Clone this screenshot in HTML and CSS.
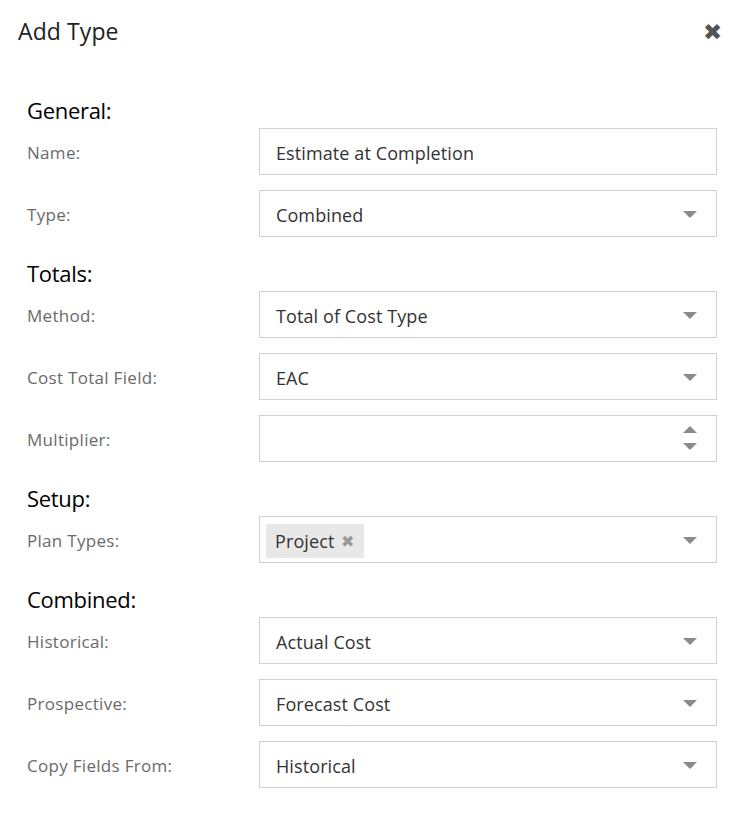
FILE: index.html
```html
<html>
  <head>
    <link rel="stylesheet" href="styles.css">
  </head>
  <body>

    <div class="dialog">
      <div class="dialog-header">
        <div class="dialog-title">Add Type</div>
        <div class="dialog-close">&#10006;</div>
      </div>

      <div class="dialog-body">
        <div class="section-title">General:</div>
        <div class="field">
          <div class="field-label">Name:</div>
          <div class="field-control">Estimate at Completion</div>
        </div>
        <div class="field">
          <div class="field-label">Type:</div>
          <div class="field-control select">Combined<span class="caret"></span></div>
        </div>

        <div class="section-title">Totals:</div>
        <div class="field">
          <div class="field-label">Method:</div>
          <div class="field-control select">Total of Cost Type<span class="caret"></span></div>
        </div>
        <div class="field">
          <div class="field-label">Cost Total Field:</div>
          <div class="field-control select">EAC<span class="caret"></span></div>
        </div>
        <div class="field">
          <div class="field-label">Multiplier:</div>
          <div class="field-control">
            <span class="spinner">
              <span class="spin-up"></span>
              <span class="spin-down"></span>
            </span>
          </div>
        </div>

        <div class="section-title">Setup:</div>
        <div class="field">
          <div class="field-label">Plan Types:</div>
          <div class="field-control select tags">
            <span class="tag">Project <span class="tag-remove">&#10006;</span></span>
            <span class="caret"></span>
          </div>
        </div>

        <div class="section-title">Combined:</div>
        <div class="field">
          <div class="field-label">Historical:</div>
          <div class="field-control select">Actual Cost<span class="caret"></span></div>
        </div>
        <div class="field">
          <div class="field-label">Prospective:</div>
          <div class="field-control select">Forecast Cost<span class="caret"></span></div>
        </div>
        <div class="field">
          <div class="field-label">Copy Fields From:</div>
          <div class="field-control select">Historical<span class="caret"></span></div>
        </div>
      </div>
    </div>

  </body>
</html>
```

FILE: styles.css
```css
body {
  font-family: "Segoe UI", "Open Sans", "Noto Sans", sans-serif;
  margin: 0;
  background: #FFFFFF;
  color: #333333;
}

.dialog {
  width: 746px;
}

.dialog-header {
  display: flex;
  align-items: center;
  justify-content: space-between;
  height: 62px;
  padding: 0 24px 0 18px;
}

.dialog-title {
  font-size: 23px;
  color: #222222;
  letter-spacing: 0.1px;
}

.dialog-close {
  font-size: 23px;
  color: #555555;
}

.dialog-body {
  padding: 27px 29px 30px 27px;
}

.section-title {
  height: 39px;
  line-height: 43px;
  font-size: 22px;
  color: #000000;
  letter-spacing: -0.3px;
}

.field {
  display: flex;
  align-items: center;
  margin-bottom: 15px;
}

.field-label {
  width: 232px;
  padding-top: 2px;
  font-size: 17px;
  color: #6A6A6A;
  letter-spacing: 0.3px;
}

.field-control {
  position: relative;
  display: flex;
  align-items: center;
  flex: 1;
  height: 47px;
  box-sizing: border-box;
  padding: 2px 16px 0;
  border: 1px solid #D0D0D0;
  font-size: 18px;
  color: #333333;
  letter-spacing: 0.1px;
}

.caret {
  position: absolute;
  right: 19px;
  top: 20px;
  width: 0;
  height: 0;
  border-left: 7px solid transparent;
  border-right: 7px solid transparent;
  border-top: 7px solid #8A8A8A;
}

.spinner {
  position: absolute;
  right: 19px;
  top: 10px;
}

.spin-up,
.spin-down {
  display: block;
  width: 0;
  height: 0;
  border-left: 7px solid transparent;
  border-right: 7px solid transparent;
}

.spin-up {
  border-bottom: 7px solid #8A8A8A;
}

.spin-down {
  margin-top: 10px;
  border-top: 7px solid #8A8A8A;
}

.tags {
  padding-left: 6px;
}

.tag {
  display: inline-flex;
  align-items: center;
  height: 34px;
  padding: 0 9px;
  background: #E8E8E8;
}

.tag-remove {
  margin-left: 7px;
  font-size: 16px;
  color: #999999;
}
```
